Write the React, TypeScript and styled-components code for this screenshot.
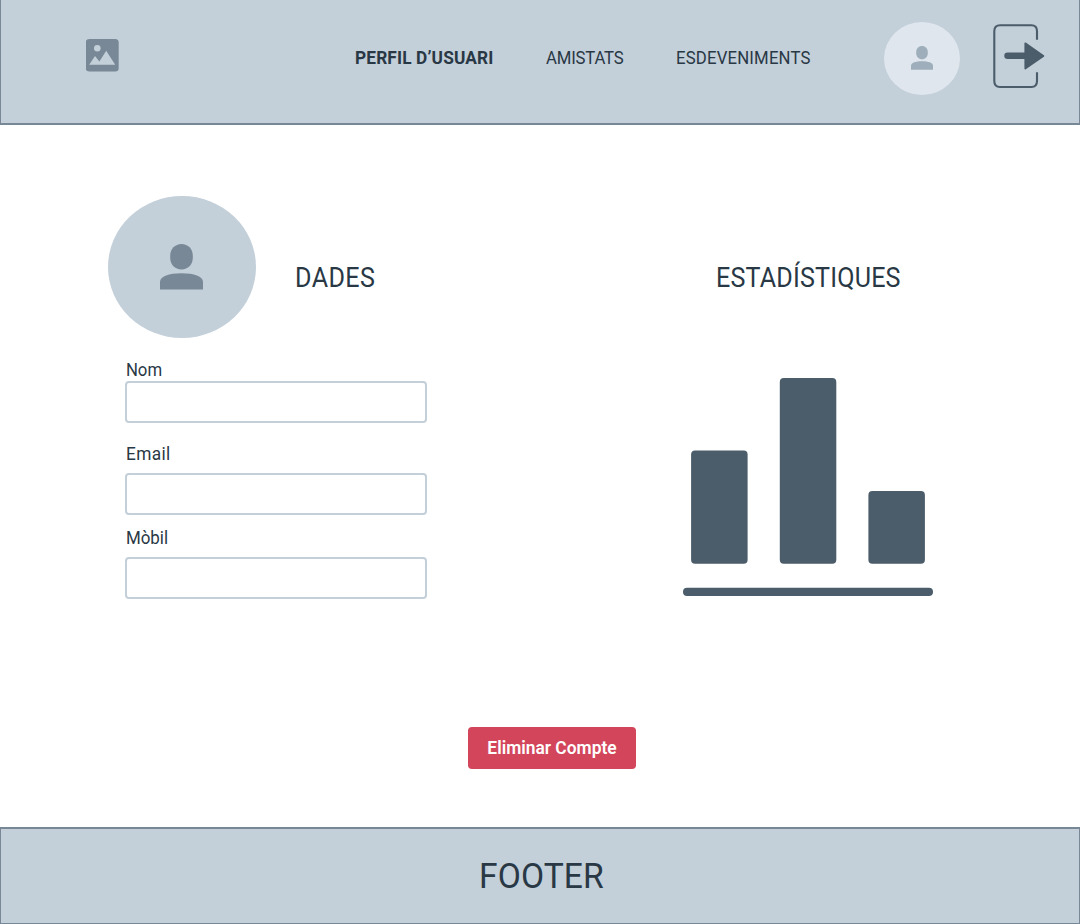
import React from "react";
import styled, { createGlobalStyle } from "styled-components";

const GlobalStyle = createGlobalStyle`
  *, *::before, *::after { box-sizing: border-box; }
  body { margin: 0; background: #fff; color: #293845; font-family: Roboto, "Liberation Sans", sans-serif; }
`;

const Page = styled.div`
  display: flex;
  flex-direction: column;
  width: 1080px;
  height: 924px;
`;

/* Slightly condensed run of text: $scale narrows the glyphs, $track spaces them. */
const Condensed = styled.span<{ $scale?: number; $track?: number; $center?: boolean }>`
  display: inline-block;
  transform: scaleX(${(p) => p.$scale ?? 0.93});
  transform-origin: ${(p) => (p.$center ? "center" : "left")};
  letter-spacing: ${(p) => p.$track ?? 0}px;
  white-space: nowrap;
`;

const Header = styled.header`
  display: flex;
  align-items: flex-start;
  height: 125px;
  padding-left: 85px;
  background: #c3cfd9;
  border: solid #788896;
  border-width: 0 1px 2px;
`;

const Logo = styled.svg`
  flex: none;
  width: 33px;
  height: 33px;
  margin-top: 39px;
`;

const Nav = styled.nav`
  display: flex;
  flex: none;
  width: 529px;
  margin: 48px 0 0 236px;
`;

const NavLink = styled.a<{ $active?: boolean; $width: number }>`
  flex: none;
  width: ${(p) => p.$width}px;
  font-size: 18px;
  line-height: 20px;
  font-weight: ${(p) => (p.$active ? 700 : 400)};
`;

const Avatar = styled.div<{ $large?: boolean }>`
  display: flex;
  flex: none;
  justify-content: center;
  width: ${(p) => (p.$large ? 148 : 76)}px;
  height: ${(p) => (p.$large ? 142 : 73)}px;
  padding-top: ${(p) => (p.$large ? 47.5 : 24)}px;
  padding-right: ${(p) => (p.$large ? 1 : 0)}px;
  border-radius: 50%;
  background: ${(p) => (p.$large ? "#c3cfd9" : "#dfe6ee")};
  color: ${(p) => (p.$large ? "#788896" : "#9eaebb")};

  svg {
    width: ${(p) => (p.$large ? 43 : 22)}px;
    height: ${(p) => (p.$large ? 46 : 24)}px;
  }
`;

const HeaderAvatar = styled(Avatar)`
  margin-top: 22px;
`;

const ExitIcon = styled.svg`
  flex: none;
  width: 52px;
  height: 65px;
  margin: 24px 0 0 33px;
`;

const Main = styled.main`
  display: flex;
  flex-direction: column;
  height: 702px;
  padding-top: 71px;
`;

const Columns = styled.div`
  display: flex;
  height: 531px;
`;

const Profile = styled.section`
  flex: none;
  width: 683px;
  padding-left: 108px;
`;

const ProfileHead = styled.div`
  display: flex;
  gap: 39px;
`;

const Title = styled.h2`
  margin: 66px 0 0;
  font-size: 27px;
  line-height: 32px;
  font-weight: 400;
`;

const Form = styled.form`
  display: flex;
  flex-direction: column;
  margin: 22px 0 0 17px;
`;

const Field = styled.label<{ $gap: number; $after: number }>`
  display: flex;
  flex-direction: column;
  align-items: flex-start;
  gap: ${(p) => p.$gap}px;
  margin-bottom: ${(p) => p.$after}px;
  font-size: 18px;
  line-height: 20px;
`;

const FieldName = styled(Condensed)`
  padding-left: 1px;
`;

const Input = styled.input`
  width: 302px;
  height: 42px;
  padding: 0 10px;
  border: 2px solid #c3cfd9;
  border-radius: 4px;
  background: #fff;
  font: inherit;
  outline: none;
`;

const Stats = styled.section`
  display: flex;
  flex: none;
  flex-direction: column;
  align-items: center;
  width: 250px;
`;

const Chart = styled.svg`
  display: block;
  width: 250px;
  height: 219px;
  margin-top: 84px;
`;

const DeleteButton = styled.button`
  width: 168px;
  height: 42px;
  margin-left: 468px;
  padding: 0;
  border: 0;
  border-radius: 4px;
  background: #d3455b;
  color: #fff;
  font: 600 18px/42px Roboto, "Liberation Sans", sans-serif;
`;

const Footer = styled.footer`
  height: 97px;
  padding: 27px 0 0 478px;
  background: #c3cfd9;
  border: solid #788896;
  border-width: 2px 1px 1px;
  font-size: 35px;
  line-height: 42px;
`;

const PersonIcon = () => (
  <svg viewBox="0 0 43 46" preserveAspectRatio="none" fill="currentColor">
    <path d="M21.5 0C28 0 32.8 5 32.8 11.5V14C32.8 20.5 28 25.5 21.5 25.5S10.2 20.5 10.2 14V11.5C10.2 5 15 0 21.5 0Z" />
    <path d="M0 45.5V38C0 32 9 29.2 21.5 29.2S43 32 43 38V45.5Z" />
  </svg>
);

const fields = [
  { label: "Nom", gap: 1, after: 21, scale: 0.93, track: 0 },
  { label: "Email", gap: 9, after: 13, scale: 0.96, track: 0.4 },
  { label: "Mòbil", gap: 9, after: 0, scale: 0.94, track: 0 },
];

export default function App() {
  return (
    <Page>
      <GlobalStyle />
      <Header>
        <Logo viewBox="0 0 33 33">
          <rect x="-0.3" width="33" height="32.5" rx="3.5" fill="#788896" />
          <circle cx="11.3" cy="9.2" r="3.3" fill="#c3cfd9" />
          <path d="M3.2 25.8 9 17 13.4 22.4 20.2 11.8 29.2 25.8Z" fill="#c3cfd9" />
        </Logo>
        <Nav>
          <NavLink $active $width={190.5}>
            <Condensed $scale={0.96} $track={0.15}>PERFIL D’USUARI</Condensed>
          </NavLink>
          <NavLink $width={130}>
            <Condensed $track={-0.2}>AMISTATS</Condensed>
          </NavLink>
          <NavLink $width={140}>
            <Condensed $track={0.2}>ESDEVENIMENTS</Condensed>
          </NavLink>
        </Nav>
        <HeaderAvatar>
          <PersonIcon />
        </HeaderAvatar>
        <ExitIcon viewBox="0 0 52 65">
          <path
            d="M44 15.8V7Q44 1.2 38.4 1.2H7Q1.3 1.2 1.3 7V57Q1.3 63 7 63H38.4Q44 63 44 57V48.2"
            fill="none"
            stroke="#4b5c6a"
            strokeWidth="2.1"
          />
          <path d="M14.5 31.8H33" stroke="#4b5c6a" strokeWidth="6.4" strokeLinecap="round" />
          <path d="M32.3 19.3 50.4 31.9 32.3 44.6Z" fill="#4b5c6a" stroke="#4b5c6a" strokeWidth="1.8" strokeLinejoin="round" />
        </ExitIcon>
      </Header>
      <Main>
        <Columns>
          <Profile>
            <ProfileHead>
              <Avatar $large>
                <PersonIcon />
              </Avatar>
              <Title>
                <Condensed $track={0.45}>DADES</Condensed>
              </Title>
            </ProfileHead>
            <Form>
              {fields.map((f) => (
                <Field key={f.label} $gap={f.gap} $after={f.after}>
                  <FieldName $scale={f.scale} $track={f.track}>{f.label}</FieldName>
                  <Input />
                </Field>
              ))}
            </Form>
          </Profile>
          <Stats>
            <Title>
              <Condensed $center $track={0.2}>ESTADÍSTIQUES</Condensed>
            </Title>
            <Chart viewBox="0 0 250 219" fill="#4b5c6a">
              <rect x="8.1" y="72.6" width="56.5" height="113.1" rx="4" />
              <rect x="96.8" y="0.1" width="56.5" height="185.6" rx="4" />
              <rect x="185.4" y="113" width="56.5" height="72.7" rx="4" />
              <rect x="0" y="209.7" width="250" height="8.3" rx="4.1" />
            </Chart>
          </Stats>
        </Columns>
        <DeleteButton>
          <Condensed $center $scale={0.965}>Eliminar Compte</Condensed>
        </DeleteButton>
      </Main>
      <Footer>
        <Condensed $scale={0.96} $track={0.1}>FOOTER</Condensed>
      </Footer>
    </Page>
  );
}
